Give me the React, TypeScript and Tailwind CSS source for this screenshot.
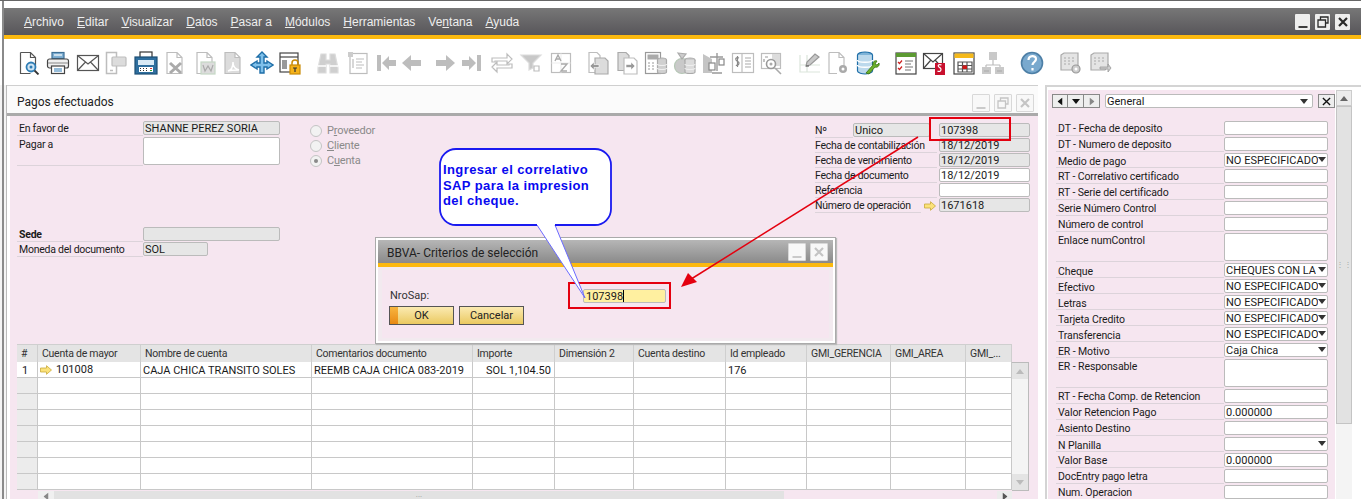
import React from 'react';

const menus: [string, string, string][] = [
  ['', 'A', 'rchivo'], ['', 'E', 'ditar'], ['', 'V', 'isualizar'], ['', 'D', 'atos'], ['', 'P', 'asar a'],
  ['', 'M', 'ódulos'], ['', 'H', 'erramientas'], ['Ve', 'n', 'tana'], ['', 'A', 'yuda'],
];

// toolbar drawings, all on a 24x24 box
const Ico = ({ ml, children }: { ml: string; children: React.ReactNode }) => (
  <svg viewBox="0 0 24 24" className={`w-6 h-6 shrink-0 ${ml}`} fill="none" strokeWidth="1.2">
    {children}
  </svg>
);

const gray = '#bdbdbd';
const pale = '#dcdcdc';

const DocGray = ({ d = false }: { d?: boolean }) => (
  <path d="M4 1.5h10l5 5v16H4z M14 1.5v5h5" stroke={gray} fill={d ? pale : '#fff'} />
);

const toolbar: [string, React.ReactNode][] = [
  ['ml-[13px]', <><path d="M3.500 1.500h10l5 5v8 M3.500 1.500v21h10 M13.500 1.500v5h5" stroke="#555" fill="#fff" /><circle cx="14" cy="16" r="4.500" stroke="#2f7db5" strokeWidth="1.800" fill="#cfe4f3" /><circle cx="14" cy="16" r="1.500" fill="#2f7db5" /><path d="M17.500 19.500l4 4" stroke="#333" strokeWidth="1.800" /></>],
  ['ml-[5px]', <><rect x="6" y="1.500" width="12" height="6" fill="#7fb0d3" stroke="#3d6f96" /><path d="M8 4h8" stroke="#fff" /><rect x="1.500" y="8" width="21" height="9" rx="2" fill="#f0f0f0" stroke="#444" /><path d="M2 12h20" stroke="#999" /><rect x="5.500" y="15" width="13" height="7.500" fill="#fff" stroke="#444" /><path d="M8 18h8M8 20h8" stroke="#2f7db5" /></>],
  ['ml-[6px]', <><rect x="1.500" y="4.500" width="21" height="15" fill="#fff" stroke="#555" /><path d="M1.500 4.500L12 13l10.500-8.500M1.500 19.500l8-8.500M22.500 19.500l-8-8.500" stroke="#555" /></>],
  ['ml-[4px]', <><rect x="2.500" y="1.500" width="10" height="21" fill="#fff" stroke={gray} strokeWidth="1.500" /><rect x="8" y="6" width="14" height="9" rx="1" fill={pale} stroke={gray} /><path d="M6 19.500h3" stroke={gray} strokeWidth="1.500" /></>],
  ['ml-[6px]', <><rect x="6" y="1" width="12" height="6" fill="#fff" stroke="#333" /><rect x="1" y="6" width="22" height="17" fill="#2f6f9f" stroke="#1d4f75" /><rect x="4" y="9" width="16" height="5" fill="#d8eaf6" /><rect x="5" y="16" width="14" height="5" fill="#fff" /><path d="M6 17.500h1M9 17.500h1M12 17.500h1M6 19.500h1M9 19.500h1M12 19.500h1" stroke="#333" /><path d="M16 17.500h2" stroke="#d33" /><path d="M16 19.500h2" stroke="#3a3" /></>],
  ['ml-[5px]', <><DocGray /><path d="M7 12l11 10M18 12L7 22" stroke="#aaa" strokeWidth="3" /></>],
  ['ml-[6px]', <><DocGray /><rect x="8" y="11" width="14" height="12" fill={pale} stroke="#c5d8c5" /><path d="M10 14l2 6 3-5 3 5 2-6" stroke="#aaa" /></>],
  ['ml-[4px]', <><DocGray d /><path d="M7 20c4-1 5-5 5-9 0 4 2 7 6 8-4 0-8 0-11 1z" stroke="#fff" strokeWidth="1.500" /></>],
  ['ml-[5px]', <><path d="M12 1l5 5h-3v6h3v-2l6 4-6 4v-2h-3v6h-4v-6H7v2l-6-4 6-4v2h3V6H7z" fill="#7fc0ea" stroke="#1e6ea8" strokeWidth="1.400" /></>],
  ['ml-[4px]', <><rect x="2" y="2" width="18" height="19" fill="#fff" stroke="#444" /><path d="M2 6h18" stroke="#444" /><rect x="4" y="9" width="5" height="9" fill="#999" /><rect x="12" y="14" width="10" height="9" fill="#f5b21a" stroke="#c98a08" /><path d="M14 14v-2a3 3 0 0 1 6 0v2" stroke="#c98a08" strokeWidth="1.500" /><path d="M15 17h4M17 17v4" stroke="#333" /></>],
  ['ml-[14px]', <><path d="M5 3h5v6h4V3h5l3 14v5h-8v-9h-4v9H2v-5z" fill="#cfcfcf" stroke={pale} /><path d="M2 15h8M14 15h8" stroke="#fff" strokeWidth="1.400" /></>],
  ['ml-[6px]', <><rect x="4" y="2.500" width="17" height="20" fill="#fff" stroke={gray} /><rect x="2" y="1" width="5" height="5" fill="#ccc" /><path d="M10 8h8M10 11h6M10 14h8M10 17h6M7 8v9" stroke={gray} /></>],
  ['ml-[4px]', <path d="M3 4h4v16H3zM8 12l7-7v4h7v6h-7v4z" fill={gray} />],
  ['ml-[2px]', <path d="M2 12l9-8v5h10v6H11v5z" fill={gray} />],
  ['ml-[9px]', <path d="M22 12l-9-8v5H3v6h10v5z" fill={gray} />],
  ['ml-[3px]', <path d="M21 4h-4v16h4zM16 12L9 5v4H2v6h7v4z" fill={gray} />],
  ['ml-[6px]', <path d="M2 11V7h15V3l5 5-5 5v-3H5v1zM22 13v4H7v4l-5-5 5-5v3h12v-1z" fill="#fff" stroke={gray} />],
  ['ml-[5px]', <><path d="M2 4h20l-8 8v5l-4 2v-7z" fill="#c8c8c8" stroke={pale} /><path d="M15 15h5v5h-5z" fill="#fff" stroke={gray} /></>],
  ['ml-[6px]', <><rect x="2.500" y="2.500" width="19" height="19" fill="#fff" stroke={gray} /><path d="M2.500 12h19M12 2.500v19" stroke="#eee" /><path d="M6 10l3-6 3 6M7 8h4" stroke="#aaa" strokeWidth="1.400" /><path d="M12 13h6l-6 7h6" stroke="#aaa" strokeWidth="1.400" /></>],
  ['ml-[13px]', <><path d="M3 1.500h8l3 3v17H3z" fill="#fff" stroke={gray} /><path d="M9 7h10l3 3v13H9z" fill={pale} stroke="#aaa" /><path d="M4 15l4-4v2.500h5v3H8V19z" fill="#999" stroke="#fff" strokeWidth="0.600" /></>],
  ['ml-[5px]', <><path d="M3 1.500h8l3 3v15H3z" fill={pale} stroke="#aaa" /><path d="M9 7h10l3 3v13H9z" fill="#fff" stroke={gray} /><path d="M20 15l-4-4v2.500h-5v3h5V19z" fill="#999" stroke="#fff" strokeWidth="0.600" /></>],
  ['ml-[5px]', <><rect x="1.500" y="1.500" width="15" height="21" fill="#fff" stroke="#999" /><rect x="3.500" y="3.500" width="11" height="5" fill="#aaa" /><path d="M4 12h2M8 12h2M4 15h2M8 15h2M4 18h2M8 18h2" stroke="#999" /><ellipse cx="18" cy="9" rx="4.500" ry="2" fill="#ccc" stroke="#aaa" /><path d="M13.500 9v12c0 2 9 2 9 0V9" fill="#d0d0d0" stroke="#aaa" /><path d="M13.500 13c0 2 9 2 9 0M13.500 17c0 2 9 2 9 0" stroke="#eee" /></>],
  ['ml-[5px]', <><circle cx="9" cy="15" r="7.500" fill="#c9c9c9" stroke="#b5c6b5" /><path d="M5 2l8 1-4 5z" fill="#ccc" stroke="#aaa" /><ellipse cx="17" cy="9" rx="5" ry="2" fill="#ccc" stroke="#aaa" /><path d="M12 9v12c0 2 10 2 10 0V9" fill={pale} stroke="#aaa" /><path d="M12 13c0 2 10 2 10 0M12 17c0 2 10 2 10 0" stroke="#eee" /></>],
  ['ml-[4px]', <><path d="M2 3l9 5v14H2z" fill="#c4c4c4" /><path d="M9 6h13M16 2v18M11 22h10" stroke="#999" strokeWidth="1.400" /><rect x="8" y="12" width="6" height="7" fill="#fff" stroke="#888" /><rect x="18" y="8" width="5" height="6" fill="#fff" stroke="#888" /></>],
  ['ml-[6px]', <><rect x="1.500" y="2.500" width="21" height="19" fill="#fff" stroke={gray} /><path d="M11 2.500v19" stroke={gray} /><path d="M14 7h6M14 10h6M14 13h6M14 16h6" stroke="#aaa" /><path d="M8 7c-2-1-4 0-3 2s3 1 3 3-2 3-3 2M6.500 5v11" stroke="#888" /></>],
  ['ml-[5px]', <><rect x="1.500" y="2.500" width="19" height="15" fill="#fff" stroke={gray} /><rect x="12" y="3" width="8" height="12" fill={pale} /><path d="M5 6h3M4 8v3" stroke="#999" /><circle cx="11" cy="13" r="4.500" fill="#fff" stroke="#999" strokeWidth="1.600" /><circle cx="11" cy="13" r="1.500" fill="#aaa" /><path d="M15 17l6 6" stroke="#aaa" strokeWidth="1.600" /></>],
  ['ml-[14px]', <><path d="M2 4v17h20M2 14h20M9 4v17" stroke="#dbe5db" /><path d="M8 15l1-4L17 3l4 3-9 8z" fill="#c8c8c8" stroke="#999" /><path d="M8 15h3" stroke="#666" /></>],
  ['ml-[4px]', <><path d="M3 1.500h10l5 5v8 M3 1.500v21h8 M13 1.500v5h5" stroke={gray} fill="#fff" /><circle cx="17" cy="18" r="4" fill="#aaa" /><circle cx="17" cy="18" r="1.500" fill="#fff" /></>],
  ['ml-[6px]', <><ellipse cx="9" cy="4" rx="7.500" ry="3" fill="#7fb4d8" stroke="#1e6ea8" /><path d="M1.500 4v16c0 2 5 3 7.500 3s7.500-1 7.500-3V4" fill="#bcd9ec" stroke="#1e6ea8" /><path d="M1.500 9c0 3 15 3 15 0M1.500 14c0 3 15 3 15 0" stroke="#fff" strokeWidth="1.500" /><path d="M10 22l7-8c-1-3 2-5 4-4l-2 3 2 1 2-2c1 3-2 5-4 4l-6 7z" fill="#6cb02a" stroke="#37700f" strokeWidth="0.800" /></>],
  ['ml-[14px]', <><rect x="2" y="2" width="20" height="21" fill="#fff" stroke="#444" /><rect x="2" y="2" width="20" height="4" fill="#5c9a32" /><path d="M4 11l1.500 1.500L8 9.500M4 17l1.500 1.500L8 15.500" stroke="#cc2222" /><path d="M11 10h8M11 13h6M11 16h8M11 19h6" stroke="#777" /></>],
  ['ml-[4px]', <><rect x="1.500" y="2.500" width="19" height="15" fill="#fff" stroke="#444" /><path d="M1.500 2.500L11 11l9.500-8.500M1.500 17.500l7-8M20.500 17.500l-7-8" stroke="#444" /><rect x="13" y="12" width="10" height="12" fill="#c8102e" /><path d="M19.500 14c-2-1-4 0-3 1.500s2.500 1 2.500 3-2 2.500-3.500 1.500" stroke="#fff" /></>],
  ['ml-[6px]', <><rect x="2" y="2" width="20" height="21" fill="#fff" stroke="#444" /><rect x="2.500" y="2.500" width="19" height="4.500" fill="#f5b91a" /><path d="M6 11h14v10H6zM10.500 11v10M15 11v10M6 14.500h14M6 18h14" stroke="#555" /><rect x="10.500" y="14.500" width="4.500" height="3.500" fill="#d01818" /></>],
  ['ml-[5px]', <><rect x="8" y="1" width="8" height="8" fill="#c9c9c9" /><path d="M12 9v5M5 14h14M5 14v2M19 14v2" stroke="#bbb" /><rect x="1" y="16" width="9" height="7" fill="#c9c9c9" /><rect x="14" y="16" width="9" height="7" fill="#c9c9c9" /><path d="M3 20h5M16 20h5" stroke="#aaa" /></>],
  ['ml-[15px]', <><circle cx="12" cy="12" r="10.500" fill="#79a9ce" stroke="#4d7fa6" strokeWidth="1.600" /><path d="M8.500 9c0-5 7.500-5 7.500-1 0 3-3.500 3-3.500 6M12.500 17v2.500" stroke="#fff" strokeWidth="2.200" /></>],
  ['ml-[14px]', <><path d="M3 4l3-2h14v14l-3 3H3z" fill="#e4e4e4" stroke="#aaa" /><path d="M6 7h2M10 7h2M14 7h2M6 10h2M10 10h2M14 10h2M6 13h2M10 13h2" stroke="#aaa" /><circle cx="18" cy="18" r="4" fill="#ccc" stroke="#999" /><circle cx="18" cy="18" r="1.500" fill="#fff" /></>],
  ['ml-[6px]', <><path d="M3 4l3-2h14v14l-3 3H3z" fill="#e4e4e4" stroke="#aaa" /><path d="M6 7h2M10 7h2M14 7h2M6 10h2M10 10h2M14 10h2M6 13h2" stroke="#aaa" /><path d="M12 16h8v-3l3 4-3 4v-3h-8z" fill="#ccc" stroke="#999" strokeWidth="0.800" /></>],
];

const Field = ({ w, h = 'h-[14px]', gray: isGray = false, children }: { w: string; h?: string; gray?: boolean; children?: React.ReactNode }) => (
  <div className={`${w} ${h} shrink-0 rounded-[2px] border border-[#bbb] px-[1px] leading-[14px] text-[11px] text-[#1a1a1a] overflow-hidden whitespace-nowrap ${isGray ? 'bg-[#e6e6e6]' : 'bg-white'}`}>
    {children}
  </div>
);

const YellowArrow = () => (
  <svg viewBox="0 0 12 10" className="w-[12px] h-[10px] shrink-0">
    <path d="M0.500 3h6V0.700L11.500 5l-5 4.300V7h-6z" fill="#fbe27a" stroke="#c9a93a" strokeWidth="0.800" />
  </svg>
);

const WinBtn = ({ kind, dim = false }: { kind: 'min' | 'max' | 'close'; dim?: boolean }) => {
  const c = dim ? '#c4c4c4' : '#2a2a2a';
  return (
    <div className={`flex items-center justify-center rounded-[1px] ${dim ? 'w-[18px] h-[18px] border border-[#d8d8d8] bg-[#f8f8f8]' : 'w-[15px] h-[16px] bg-[#eeeeee]'}`}>
      <svg viewBox="0 0 14 14" className="w-[14px] h-[14px]" fill="none" stroke={c}>
        {kind === 'min' && <path d="M2.500 12h9" strokeWidth="1.800" />}
        {kind === 'max' && <path d="M4.500 4.500V2h7.500v6H9.500M2 5h7.500v7H2z" strokeWidth="1.300" />}
        {kind === 'close' && <path d="M3 3l8 8M11 3l-8 8" strokeWidth="2.200" />}
      </svg>
    </div>
  );
};

const Tri = ({ cls = 'fill-[#333]' }: { cls?: string }) => (
  <svg viewBox="0 0 8 5" className={`w-[8px] h-[5px] shrink-0 ${cls}`}><path d="M0 0h8L4 5z" /></svg>
);

const columns = [
  { w: 'w-[21px]', t: '#' },
  { w: 'w-[103px]', t: 'Cuenta de mayor' },
  { w: 'w-[171px]', t: 'Nombre de cuenta' },
  { w: 'w-[161px]', t: 'Comentarios documento' },
  { w: 'w-[82px]', t: 'Importe' },
  { w: 'w-[79px]', t: 'Dimensión 2' },
  { w: 'w-[92px]', t: 'Cuenta destino' },
  { w: 'w-[81px]', t: 'Id empleado' },
  { w: 'w-[84px]', t: 'GMI_GERENCIA' },
  { w: 'w-[75px]', t: 'GMI_AREA' },
  { w: 'w-[46px]', t: 'GMI_...' },
];

const firstRow = ['1', '101008', 'CAJA CHICA TRANSITO SOLES', 'REEMB CAJA CHICA 083-2019', 'SOL 1,104.50', '', '', '176', '', '', ''];

type SideRow = { label: string; value?: string; select?: boolean; tall?: boolean };

const sideRows: SideRow[] = [
  { label: 'DT - Fecha de deposito' },
  { label: 'DT - Numero de deposito' },
  { label: 'Medio de pago', value: 'NO ESPECIFICADO', select: true },
  { label: 'RT - Correlativo certificado' },
  { label: 'RT - Serie del certificado' },
  { label: 'Serie Número Control' },
  { label: 'Número de control' },
  { label: 'Enlace numControl', tall: true },
  { label: 'Cheque', value: 'CHEQUES CON LA', select: true },
  { label: 'Efectivo', value: 'NO ESPECIFICADO', select: true },
  { label: 'Letras', value: 'NO ESPECIFICADO', select: true },
  { label: 'Tarjeta Credito', value: 'NO ESPECIFICADO', select: true },
  { label: 'Transferencia', value: 'NO ESPECIFICADO', select: true },
  { label: 'ER - Motivo', value: 'Caja Chica', select: true },
  { label: 'ER - Responsable', tall: true },
  { label: 'RT - Fecha Comp. de Retencion' },
  { label: 'Valor Retencion Pago', value: '0.000000' },
  { label: 'Asiento Destino' },
  { label: 'N Planilla', select: true },
  { label: 'Valor Base', value: '0.000000' },
  { label: 'DocEntry pago letra' },
  { label: 'Num. Operacion' },
];

const Label = ({ w, h = 'h-[15px]', bold = false, pl = 'pl-[2px]', children }: { w: string; h?: string; bold?: boolean; pl?: string; children: React.ReactNode }) => (
  <div className={`${w} ${h} ${pl} shrink-0 border-b border-[#dcd3da] leading-[16px] text-[10.500px] tracking-[-0.25px] whitespace-nowrap overflow-visible text-[#1a1a1a] ${bold ? 'font-bold' : ''}`}>
    {children}
  </div>
);

const Radio = ({ on = false, label, u }: { on?: boolean; label: string; u: number }) => (
  <div className="flex items-center h-[15px] gap-[5px] text-[11px] tracking-[-0.2px] text-[#8a8a8a]">
    <div className="w-[12px] h-[12px] rounded-full border border-[#c4c4c4] bg-[#f2f2f2] flex items-center justify-center">
      {on && <div className="w-[4px] h-[4px] rounded-full bg-[#8a8a8a]" />}
    </div>
    <span className="pt-[1px]">
      {label.slice(0, u)}
      <span className="underline">{label[u]}</span>
      {label.slice(u + 1)}
    </span>
  </div>
);

const rightRows = [
  { label: 'Fecha de contabilización', v: '18/12/2019', g: true },
  { label: 'Fecha de vencimiento', v: '18/12/2019', g: true },
  { label: 'Fecha de documento', v: '18/12/2019', g: false },
  { label: 'Referencia', v: '', g: false },
];

export default function App() {
  return (
    <div className="relative w-[1361px] h-[499px] overflow-hidden bg-white font-['Roboto',sans-serif] flex flex-col">
      <div className="h-[1px] bg-[#666] shrink-0" />
      <div className="h-[7px] shrink-0" />
      <div className="absolute left-[2px] top-[1px] w-[2px] h-[498px] bg-[#8a8a8a]" />

      {/* menu bar */}
      <div className="ml-[4px] h-[27px] shrink-0 bg-gradient-to-b from-[#777777] to-[#58565a] flex items-center pl-[20px] pr-[11px] justify-between">
        <div className="flex gap-[13px] text-[12px] text-[#eeeeee] whitespace-nowrap font-['Liberation_Sans',sans-serif]">
          {menus.map(([a, b, c]) => (
            <span key={a + b + c}>{a}<span className="underline">{b}</span>{c}</span>
          ))}
        </div>
        <div className="flex gap-[5px]">
          <WinBtn kind="min" />
          <WinBtn kind="max" />
          <WinBtn kind="close" />
        </div>
      </div>
      <div className="ml-[4px] h-[4px] shrink-0 bg-[#fbb90f]" />

      {/* toolbar */}
      <div className="ml-[4px] h-[46px] shrink-0 flex items-center pt-[1px]">
        {toolbar.map(([ml, node], i) => (
          <Ico key={i} ml={ml}>{node}</Ico>
        ))}
      </div>

      <div className="flex flex-1 min-h-0">
        <div className="w-[7px] shrink-0 border-r border-[#bbb] bg-[#f4f4f4]" />

        {/* Pagos efectuados */}
        <div className="w-[1031px] shrink-0 flex flex-col border-t border-[#cfcfcf]">
          <div className="h-[27px] shrink-0 flex items-center justify-between pl-[10px] pr-[4px] bg-[#fbfbfb]">
            <span className="text-[12px] text-[#222] pt-[5px]">Pagos efectuados</span>
            <div className="flex gap-[4px] pt-[6px]">
              <WinBtn kind="min" dim />
              <WinBtn kind="max" dim />
              <WinBtn kind="close" dim />
            </div>
          </div>
          <div className="h-[3px] shrink-0 bg-[#aaaaaa]" />
          <div className="flex-1 min-h-0 ml-[3px] bg-[#f6e6f0] flex flex-col">
            <div className="h-[228px] shrink-0 flex">
              <div className="ml-[7px] w-[263px] shrink-0 flex flex-col pt-[5px]">
                <div className="flex">
                  <Label w="w-[126px]">En favor de</Label>
                  <Field w="w-[137px]" gray>SHANNE PEREZ SORIA</Field>
                </div>
                <div className="flex mt-[1px]">
                  <Label w="w-[126px]" h="h-[29px]">Pagar a</Label>
                  <Field w="w-[137px]" h="h-[28px]" />
                </div>
                <div className="flex mt-[61px]">
                  <Label w="w-[126px]" bold>Sede</Label>
                  <Field w="w-[137px]" gray />
                </div>
                <div className="flex">
                  <Label w="w-[126px]">Moneda del documento</Label>
                  <Field w="w-[65px]" gray>SOL</Field>
                </div>
              </div>

              <div className="ml-[30px] pt-[7px] flex flex-col">
                <Radio label="Proveedor" u={1} />
                <Radio label="Cliente" u={0} />
                <Radio on label="Cuenta" u={1} />
              </div>

              <div className="ml-auto mr-[8px] w-[215px] shrink-0 flex flex-col pt-[7px]">
                <div className="flex h-[15px]">
                  <Label w="w-[38px]" pl="pl-0">Nº</Label>
                  <Field w="w-[77px]" gray>Unico</Field>
                  <div className="w-[9px] shrink-0" />
                  <Field w="w-[91px]" gray>107398</Field>
                </div>
                {rightRows.map((r) => (
                  <div key={r.label} className="flex h-[15px]">
                    <Label w="w-[122px]" pl="pl-0">{r.label}</Label>
                    <div className="w-[2px] shrink-0" />
                    <Field w="w-[91px]" gray={r.g}>{r.v}</Field>
                  </div>
                ))}
                <div className="flex h-[15px]">
                  <Label w="w-[106px]" pl="pl-0">Número de operación</Label>
                  <div className="w-[18px] shrink-0 flex items-center justify-center"><YellowArrow /></div>
                  <Field w="w-[91px]" gray>1671618</Field>
                </div>
              </div>
            </div>

            {/* lines grid */}
            <div className="ml-[7px] flex flex-col text-[11px] text-[#1a1a1a]">
              <div className="flex h-[18px] w-[995px] bg-[#e4e4e4] border-t border-[#cfcfcf]">
                {columns.map((c) => (
                  <div key={c.t} className={`${c.w} shrink-0 border-r border-[#cfcfcf] pl-[4px] leading-[18px] text-[10.500px] tracking-[-0.25px] whitespace-nowrap text-[#333]`}>{c.t}</div>
                ))}
              </div>
              <div className="flex">
                <div className="w-[995px] shrink-0">
                  {[0, 1, 2, 3, 4, 5, 6, 7].map((row) => (
                    <div key={row} className="flex h-[16px] bg-white border-b border-[#c8c8c8] box-border">
                      {columns.map((c, i) => (
                        <div
                          key={c.t}
                          className={`${c.w} shrink-0 border-r border-[#c8c8c8] leading-[17px] whitespace-nowrap overflow-hidden ${i === 0 ? 'pl-[5px]' : 'pl-[2px]'} ${i === 0 && row > 0 ? 'bg-[#ececec]' : ''} ${i === 4 ? 'text-right pr-[3px]' : ''}`}
                        >
                          {row === 0 && i === 1 ? (
                            <span className="flex items-center gap-[4px] h-[15px]"><YellowArrow />101008</span>
                          ) : row === 0 ? firstRow[i] : ''}
                        </div>
                      ))}
                    </div>
                  ))}
                </div>
                <div className="w-[17px] shrink-0 h-[129px] border border-[#bbb] border-l-0 bg-[#f4f4f4] flex flex-col justify-between items-center">
                  <div className="w-full h-[16px] bg-[#e4e4e4] flex items-center justify-center"><Tri cls="fill-[#bbb] rotate-180" /></div>
                  <div className="w-full h-[16px] bg-[#e4e4e4] flex items-center justify-center"><Tri cls="fill-[#bbb]" /></div>
                </div>
              </div>
              <div className="flex h-[9px] w-[995px]">
                <div className="ml-[21px] w-[16px] bg-[#f0f0f0] flex items-start justify-center"><Tri cls="fill-[#888] rotate-90 mt-[3px]" /></div>
                <div className="w-[730px] bg-[#e2e2e2] flex justify-center text-[#999] leading-[8px] text-[8px]">...</div>
                <div className="ml-auto w-[15px] bg-[#ececec] flex items-start justify-center"><Tri cls="fill-[#555] -rotate-90 mt-[3px]" /></div>
              </div>
            </div>
          </div>
        </div>

        {/* side panel */}
        <div className="ml-[7px] flex-1 min-w-0 flex border-l-2 border-t-2 border-[#d4d4d4] bg-white">
          <div className="ml-[1px] mt-[3px] w-[287px] shrink-0 bg-[#f6e6f0] flex flex-col">
            <div className="flex items-center h-[14px] mt-[4px] pl-[4px]">
              <div className="flex border border-[#888] bg-[#eee] h-[14px]">
                <div className="w-[15px] flex items-center justify-center border-r border-[#888]"><Tri cls="fill-[#111] rotate-90" /></div>
                <div className="w-[16px] flex items-center justify-center border-r border-[#888]"><Tri cls="fill-[#111]" /></div>
                <div className="w-[15px] flex items-center justify-center"><Tri cls="fill-[#888] -rotate-90" /></div>
              </div>
              <div className="ml-[5px] w-[208px] h-[14px] bg-white border border-[#bbb] rounded-[2px] pl-[1px] pr-[4px] text-[11px] leading-[13px] text-[#1a1a1a] flex items-center justify-between">
                <span className="pt-[1px]">General</span><Tri />
              </div>
              <div className="ml-[5px] w-[17px] h-[14px] border border-[#888] bg-[#eee] flex items-center justify-center">
                <svg viewBox="0 0 10 10" className="w-[9px] h-[9px]" stroke="#111" strokeWidth="1.500"><path d="M1 1l8 8M9 1l-8 8" /></svg>
              </div>
            </div>
            <div className="mt-[12px] pl-[8px] flex flex-col">
              {sideRows.map((r) => (
                <div key={r.label} className={`flex ${r.tall ? 'h-[30px]' : 'h-[16px]'}`}>
                  <div className={`w-[168px] shrink-0 h-full border-b border-[#dcd3da] pl-[2px] text-[10.500px] tracking-[-0.1px] leading-[16px] text-[#1a1a1a] whitespace-nowrap ${r.select ? 'pt-[2px]' : 'pt-[1px]'}`}>{r.label}</div>
                  <div className={`w-[104px] shrink-0 h-[calc(100%-2px)] mt-[1px] bg-white border border-[#bbb] rounded-[2px] pl-[1px] text-[11px] leading-[14px] text-[#1a1a1a] whitespace-nowrap overflow-hidden ${r.select ? 'flex justify-between items-start' : ''}`}>
                    {r.select ? <><span className="min-w-0 overflow-hidden">{r.value}</span><span className="pt-[3px] pr-[1px] shrink-0"><Tri /></span></> : r.value}
                  </div>
                </div>
              ))}
            </div>
          </div>
          <div className="ml-[1px] mt-[3px] w-[16px] shrink-0 flex flex-col bg-[#f4f4f4]">
            <div className="h-[16px] bg-[#ececec] border border-[#ccc] flex items-center justify-center"><Tri cls="fill-[#666] rotate-180" /></div>
            <div className="h-[318px] bg-[#e2e2e2] border border-[#c4c4c4] flex items-center justify-center text-[8px] leading-[6px] text-[#aaa]">⋮⋮</div>
          </div>
        </div>
      </div>

      {/* dialog floats over the form */}
      <div className="absolute left-[375px] top-[237px] w-[461px] h-[107px] border border-[#aaa] bg-white p-[2px] flex flex-col shadow-[1px_1px_1px_#bbb]">
        <div className="h-[23px] shrink-0 bg-gradient-to-b from-[#b6b6b6] to-[#8a8a8a] flex items-center justify-between pl-[9px] pr-[5px]">
          <span className="text-[12px] text-[#222] pt-[3px]">BBVA- Criterios de selección</span>
          <div className="flex gap-[4px]">
            <WinBtn kind="min" dim />
            <WinBtn kind="close" dim />
          </div>
        </div>
        <div className="h-[4px] shrink-0 bg-[#fbb90f]" />
        <div className="flex-1 bg-[#f2eaef] px-[4px] pt-[3px] pb-[3px]">
          <div className="h-full bg-[#f6e6f0] pl-[7px] flex flex-col">
            <div className="flex items-center h-[15px] mt-[18px]">
              <span className="w-[194px] shrink-0 pl-[1px] pt-[1px] text-[11px] text-[#333]">NroSap:</span>
              <div className="w-[83px] h-[14px] bg-[#fff0a0] border border-[#bbb] rounded-[2px] pl-[2px] text-[11px] leading-[14px] text-[#1a1a1a] flex">
                <span className="border-r border-black h-[12px]">107398</span>
              </div>
            </div>
            <div className="flex gap-[5px] mt-[3px]">
              <div className="relative w-[65px] h-[19px] border border-[#555] bg-gradient-to-b from-[#fbeab0] to-[#eac95e] text-center text-[11px] leading-[18px] text-[#222]">
                <div className="absolute left-0 top-0 bottom-0 w-[8px] bg-gradient-to-b from-[#f7b53e] to-[#e8890f]" />
                OK
              </div>
              <div className="w-[65px] h-[19px] border border-[#555] bg-gradient-to-b from-[#fbeab0] to-[#eac95e] text-center text-[11px] leading-[18px] text-[#222]">Cancelar</div>
            </div>
          </div>
        </div>
      </div>

      {/* annotations pasted on the screenshot */}
      <div className="absolute left-[929px] top-[117px] w-[82px] h-[24px] border-2 border-[#e4000f]" />
      <div className="absolute left-[568px] top-[282px] w-[103px] h-[27px] border-2 border-[#e4000f]" />
      <svg className="absolute left-[670px] top-[130px] w-[260px] h-[165px]" viewBox="0 0 260 165" fill="none">
        <path d="M248 7L18 151" stroke="#e4000f" strokeWidth="1.500" />
        <path d="M11 157l7-14 9 9z" fill="#e4000f" />
      </svg>
      <svg className="absolute left-[438px] top-[147px] w-[175px] h-[155px] overflow-visible" viewBox="0 0 175 155" fill="none">
        <path d="M18 2H157a16 16 0 0 1 16 16V62a16 16 0 0 1-16 16H117L147 151L99 78H18A16 16 0 0 1 2 62V18A16 16 0 0 1 18 2z" fill="#fff" />
        <path d="M99 78L147 151L117 78" stroke="#6a6aff" strokeWidth="1" />
        <path d="M117 78H157a16 16 0 0 0 16-16V18a16 16 0 0 0-16-16H18A16 16 0 0 0 2 18V62a16 16 0 0 0 16 16H99" stroke="#1a1af0" strokeWidth="1.800" />
      </svg>
      <div className="absolute left-[443px] top-[162px] w-[165px] text-[13px] leading-[15.500px] font-bold text-[#0808f0] font-['Liberation_Sans',sans-serif] tracking-[0.4px]">
        Ingresar el correlativo
        <br />
        SAP para la impresion
        <br />
        del cheque.
      </div>
    </div>
  );
}
